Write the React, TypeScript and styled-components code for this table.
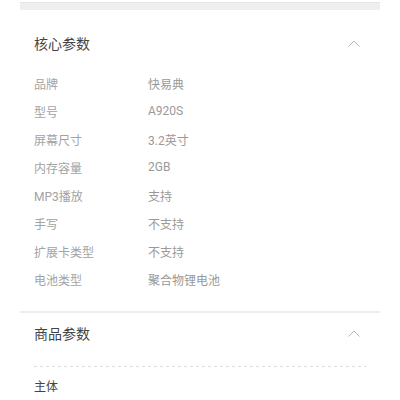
import styled, { createGlobalStyle } from 'styled-components';

const GlobalStyle = createGlobalStyle`
  html, body {
    margin: 0;
    padding: 0;
    background: #ffffff;
  }
  body {
    font-family: Roboto, "Noto Sans CJK SC", sans-serif;
    -webkit-font-smoothing: antialiased;
  }
`;

const Page = styled.div`
  width: 400px;
  height: 400px;
  overflow: hidden;
  padding: 0 20px;
  box-sizing: border-box;
`;

const TopStrip = styled.div`
  margin-top: 2px;
  height: 8px;
  background: #efefef;
  border-top: 1px solid #e6e6e6;
  box-sizing: border-box;
`;

const Section = styled.section<{ divided?: boolean }>`
  padding: ${({ divided }) => (divided ? '0' : '13px')} 14px 0;
  border-top: ${({ divided }) => (divided ? '2px solid #eeeeee' : 'none')};
`;

const Header = styled.div`
  height: 40px;
  display: flex;
  align-items: center;
  justify-content: space-between;
`;

const Title = styled.h3`
  margin: 0;
  font-size: 14px;
  font-weight: 400;
  color: #444444;
`;

const Chevron = styled.svg`
  width: 12px;
  height: 8px;
  margin-right: 6px;
  margin-top: 2px;
`;

const List = styled.div`
  padding: 6px 0 18px;
`;

const Row = styled.div`
  height: 28px;
  display: grid;
  grid-template-columns: 114px 1fr;
  align-items: center;
  font-size: 12px;
`;

const Label = styled.span`
  color: #a3a3a3;
`;

const Value = styled.span`
  color: #999999;
`;

const Dashed = styled.div`
  height: 1px;
  margin-top: 13px;
  background: repeating-linear-gradient(to right, #dddddd 0 3px, transparent 3px 6px);
`;

const SubTitle = styled.div`
  height: 28px;
  margin-top: 4px;
  display: flex;
  align-items: center;
  font-size: 12px;
  color: #444444;
`;

const ChevronUp = () => (
  <Chevron viewBox="0 0 12 8">
    <polyline points="0.5,6.5 6,1 11.5,6.5" fill="none" stroke="#b5b5b5" strokeWidth="1" />
  </Chevron>
);

const specs: [string, string][] = [
  ['品牌', '快易典'],
  ['型号', 'A920S'],
  ['屏幕尺寸', '3.2英寸'],
  ['内存容量', '2GB'],
  ['MP3播放', '支持'],
  ['手写', '不支持'],
  ['扩展卡类型', '不支持'],
  ['电池类型', '聚合物锂电池'],
];

export default function App() {
  return (
    <Page>
      <GlobalStyle />
      <TopStrip />
      <Section>
        <Header>
          <Title>核心参数</Title>
          <ChevronUp />
        </Header>
        <List>
          {specs.map(([label, value]) => (
            <Row key={label}>
              <Label>{label}</Label>
              <Value>{value}</Value>
            </Row>
          ))}
        </List>
      </Section>
      <Section divided>
        <Header>
          <Title>商品参数</Title>
          <ChevronUp />
        </Header>
        <Dashed />
        <SubTitle>主体</SubTitle>
      </Section>
    </Page>
  );
}
